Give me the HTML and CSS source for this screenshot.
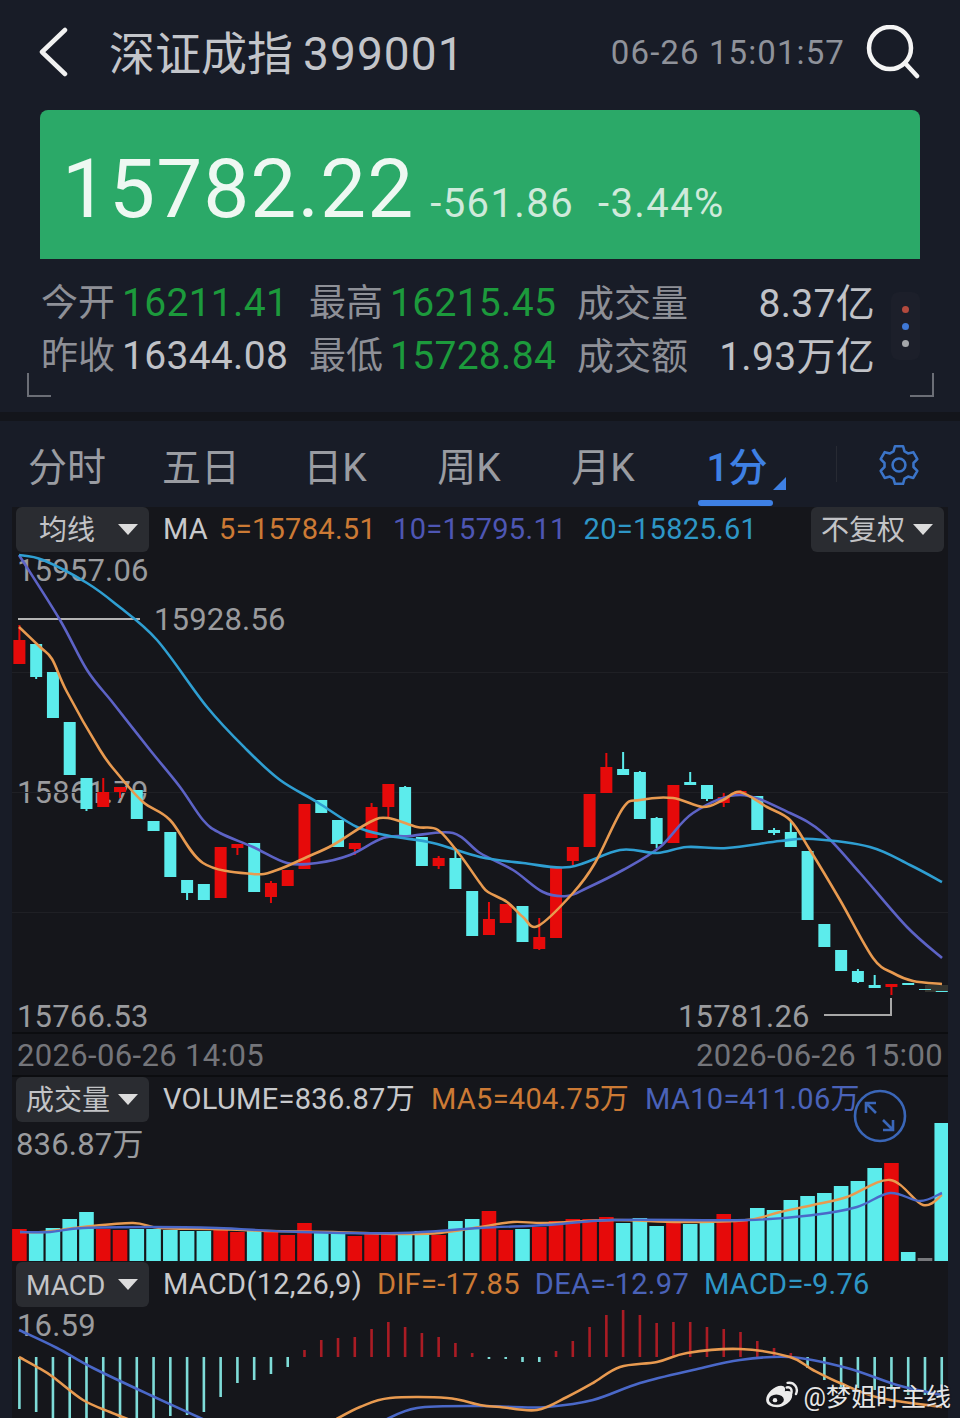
FILE: index.html
```html
<!DOCTYPE html>
<html lang="zh">
<head>
    <meta charset="UTF-8">
    <title>深证成指 399001</title>
    <link rel="stylesheet" href="styles.css">
</head>
<body>
<div class="page">
    <header class="topbar">
        <svg class="back" width="30" height="50" viewBox="0 0 30 50"><path d="M26 3 3 25l23 22"/></svg>
        <h1 class="title">深证成指<span class="code">399001</span></h1>
        <span class="clock">06-26 15:01:57</span>
        <svg class="search" width="54" height="54" viewBox="0 0 54 54"><circle cx="24" cy="23" r="21"/><path d="M39 38 51 51"/></svg>
    </header>

    <section class="quote">
        <span class="price">15782.22</span>
        <span class="change">-561.86</span>
        <span class="change">-3.44%</span>
    </section>

    <section class="stats">
        <div class="stat"><span class="key">今开</span><span class="down">16211.41</span></div>
        <div class="stat"><span class="key">最高</span><span class="down">16215.45</span></div>
        <div class="stat stat-wide"><span class="key">成交量</span><span class="plain">8.37亿</span></div>
        <div class="stat"><span class="key">昨收</span><span class="plain">16344.08</span></div>
        <div class="stat"><span class="key">最低</span><span class="down">15728.84</span></div>
        <div class="stat stat-wide"><span class="key">成交额</span><span class="plain">1.93万亿</span></div>
        <div class="dots"><i class="dot-red"></i><i class="dot-blue"></i><i class="dot-grey"></i></div>
        <i class="corner corner-l"></i>
        <i class="corner corner-r"></i>
    </section>

    <nav class="tabs">
        <a class="tab">分时</a>
        <a class="tab">五日</a>
        <a class="tab">日K</a>
        <a class="tab">周K</a>
        <a class="tab">月K</a>
        <a class="tab active">1分</a>
        <i class="tab-sep"></i>
        <svg class="gear" width="44" height="44" viewBox="0 0 48 48">
            <path d="M19.6 3.5h8.8L30 9.2l3.9 2.2 5.7-1.4 4.4 7.5-4.2 4.3v4.4l4.2 4.3-4.4 7.6-5.7-1.5-3.9 2.2-1.6 5.7h-8.8L18 38.8l-3.9-2.2-5.7 1.5L4 30.5l4.2-4.3v-4.4L4 17.5 8.4 10l5.7 1.4L18 9.2z"/>
            <circle cx="24" cy="24" r="7"/>
        </svg>
    </nav>

    <main class="charts">
        <section class="pane pane-main">
            <div class="pane-head">
                <span class="select">均线<i class="caret"></i></span>
                <span class="legend">
                    <span class="plain-l">MA</span>
                    <span class="c-orange">5=15784.51</span>
                    <span class="c-purple">10=15795.11</span>
                    <span class="c-sky">20=15825.61</span>
                </span>
                <span class="select select-right">不复权<i class="caret"></i></span>
            </div>
            <span class="tick tick-top">15957.06</span>
            <span class="tick tick-high">15928.56</span>
            <span class="tick tick-mid">15861.79</span>
            <span class="tick tick-bottom">15766.53</span>
            <span class="tick tick-low">15781.26</span>
        </section>

        <div class="axis">
            <span>2026-06-26 14:05</span>
            <span>2026-06-26 15:00</span>
        </div>

        <section class="pane pane-vol">
            <div class="pane-head">
                <span class="select">成交量<i class="caret"></i></span>
                <span class="legend">
                    <span class="plain-l">VOLUME=836.87万</span>
                    <span class="c-orange">MA5=404.75万</span>
                    <span class="c-blue">MA10=411.06万</span>
                </span>
            </div>
            <span class="tick tick-vol">836.87万</span>
        </section>

        <section class="pane pane-macd">
            <div class="pane-head">
                <span class="select">MACD<i class="caret"></i></span>
                <span class="legend">
                    <span class="plain-l">MACD(12,26,9)</span>
                    <span class="c-orange">DIF=-17.85</span>
                    <span class="c-blue">DEA=-12.97</span>
                    <span class="c-sky">MACD=-9.76</span>
                </span>
            </div>
            <span class="tick tick-macd">16.59</span>
        </section>

        <svg id="plot" class="plot" width="936" height="911" viewBox="12 507 936 911"></svg>

        <svg class="expand" width="56" height="56" viewBox="0 0 56 56">
            <circle cx="28" cy="28" r="25"/>
            <path d="M14 15 24 25M31 32 41 42M14 25V15H24M41 32V42H31"/>
        </svg>
    </main>

    <div class="mark">
        <svg width="34" height="28" viewBox="0 0 36 30">
            <path class="mark-body" d="M1 20C1 13 10 5 17 5c4 0 5 3 4 6 5-1 8 0 8 4 0 7-9 13-16 13C6 28 1 25 1 20z"/>
            <ellipse class="mark-eye" cx="12" cy="20" rx="8" ry="5.5"/>
            <circle class="mark-pupil" cx="10.5" cy="20.5" r="2.4"/>
            <path class="mark-arc" d="M23 7c4-1 6 2 5 6M24 2c7-1 12 5 9 12"/>
        </svg>
        <span>@梦姐盯主线</span>
    </div>
</div>
<script src="chart.js"></script>
</body>
</html>
```

FILE: styles.css
```css
* {
    margin: 0;
    padding: 0;
    box-sizing: border-box;
}
body {
    background-color: #181c27;
    font-family: Roboto, "Noto Sans CJK SC", sans-serif;
}
.page {
    position: relative;
    width: 960px;
    height: 1418px;
    overflow: hidden;
    background-color: #181c27;
}

/* top bar */
.topbar {
    display: flex;
    align-items: center;
    height: 110px;
    padding: 0 40px 6px 39px;
}
.back path {
    fill: none;
    stroke: #f1f1f1;
    stroke-width: 4.5;
    stroke-linecap: round;
    stroke-linejoin: round;
}
.title {
    margin-left: 40px;
    margin-top: -4px;
    font-size: 46px;
    font-weight: 400;
    color: #c3c5ca;
    white-space: nowrap;
}
.code {
    margin-left: 10px;
    letter-spacing: 1.1px;
}
.clock {
    margin-left: auto;
    margin-right: 21px;
    margin-top: 1px;
    font-size: 33px;
    letter-spacing: 1.1px;
    color: #8f929a;
}
.search {
    flex: none;
}
.search circle,
.search path {
    fill: none;
    stroke: #f4f4f4;
    stroke-width: 4.5;
    stroke-linecap: round;
}

/* price box */
.quote {
    display: flex;
    align-items: baseline;
    height: 149px;
    margin: 0 40px;
    padding: 33px 0 0 22px;
    background-color: #2ba968;
    border-radius: 8px 8px 0 0;
    color: #eef8f2;
}
.price {
    font-size: 82px;
    line-height: 92px;
    letter-spacing: 1px;
}
.change {
    margin-left: 16px;
    font-size: 40px;
    letter-spacing: 1.4px;
    color: #cfeadb;
}
.change + .change {
    margin-left: 24px;
}

/* open / high / low */
.stats {
    position: relative;
    display: grid;
    grid-template-columns: 268px 268px 298px;
    grid-auto-rows: 53px;
    align-items: center;
    height: 153px;
    padding: 14px 0 0 41px;
    font-size: 39px;
    letter-spacing: 0.3px;
    color: #c0c2c7;
}
.stat {
    display: flex;
    align-items: baseline;
    gap: 7px;
    white-space: nowrap;
}
.stat-wide {
    justify-content: space-between;
}
.key {
    font-size: 37px;
    letter-spacing: 0;
    color: #8e9097;
}
.down {
    color: #1c9a3c;
}
.dots {
    position: absolute;
    left: 891px;
    top: 33px;
    display: flex;
    flex-direction: column;
    align-items: center;
    gap: 10px;
    width: 29px;
    height: 68px;
    padding-top: 14px;
    background-color: #1c1f2a;
    border-radius: 8px;
}
.dots i {
    width: 7px;
    height: 7px;
    border-radius: 50%;
}
.dot-red { background-color: #b34a3e; }
.dot-blue { background-color: #3f78d6; }
.dot-grey { background-color: #a4a6aa; }
.corner {
    position: absolute;
    top: 114px;
    width: 24px;
    height: 24px;
    border-bottom: 2px solid #6b6e76;
}
.corner-l {
    left: 27px;
    border-left: 2px solid #6b6e76;
}
.corner-r {
    left: 910px;
    border-right: 2px solid #6b6e76;
}

/* period tabs */
.tabs {
    position: relative;
    display: flex;
    align-items: center;
    height: 95px;
    padding-bottom: 1px;
    border-top: 9px solid #13151b;
}
.tab {
    position: relative;
    width: 134px;
    font-size: 39px;
    text-align: center;
    color: #9a9ca2;
}
.tab.active {
    font-weight: 500;
    color: #3e80e4;
}
.tab.active::before {
    content: "";
    position: absolute;
    left: 28px;
    top: 64px;
    width: 75px;
    height: 6px;
    background-color: #3e80e4;
    border-radius: 3px;
}
.tab.active::after {
    content: "";
    position: absolute;
    left: 103px;
    top: 41px;
    border-style: solid;
    border-width: 0 0 13px 13px;
    border-color: transparent transparent #3e80e4 transparent;
}
.tab-sep {
    width: 1px;
    height: 36px;
    margin-left: 32px;
    background-color: #272a33;
}
.gear {
    margin-left: 40px;
    margin-top: 2px;
}
.gear path,
.gear circle {
    fill: none;
    stroke: #3b74c8;
    stroke-width: 2.8;
    stroke-linejoin: round;
}

/* chart area */
.charts {
    position: relative;
    width: 936px;
    height: 911px;
    margin-left: 12px;
    background-color: #15161b;
}
.pane {
    position: relative;
}
.pane-main { height: 525px; }
.pane-vol { height: 185px; }
.pane-macd { height: 156px; }
.pane-head {
    display: flex;
    align-items: center;
    height: 45px;
    padding: 0 4px;
}
.select {
    position: relative;
    display: block;
    width: 133px;
    height: 45px;
    padding: 0 0 0 10px;
    background-color: #2a2c31;
    border-radius: 6px;
    font-size: 28px;
    line-height: 47px;
    color: #c2c3c6;
    white-space: nowrap;
}
.pane-main .select {
    padding-left: 23px;
}
.pane-main .select-right {
    margin-left: auto;
    padding-left: 10px;
}
.caret {
    position: absolute;
    right: 11px;
    top: 17px;
    border-style: solid;
    border-width: 11px 10px 0 10px;
    border-color: #dcdcdc transparent transparent transparent;
}
.legend {
    display: flex;
    gap: 16px;
    margin-left: 14px;
    font-size: 29px;
    line-height: 47px;
    white-space: nowrap;
}
.pane-macd .legend {
    gap: 15px;
}
.pane-main .legend {
    gap: 17px;
}
.legend span {
    letter-spacing: 0.3px;
}
.pane-main .plain-l {
    margin-right: -6px;
}
.plain-l { color: #c8c9cc; }
.c-orange { color: #cc7a35; }
.c-purple { color: #4e56b4; }
.c-blue { color: #4a62b8; }
.c-sky { color: #2e96c6; }

/* price marks that sit over the plot */
.tick {
    position: absolute;
    font-size: 31px;
    line-height: 36px;
    letter-spacing: 0.2px;
    color: #9a9b9e;
    white-space: nowrap;
}
.tick-top { left: 5px; top: 46px; }
.tick-high { left: 142px; top: 95px; }
.tick-mid { left: 5px; top: 268px; }
.tick-bottom { left: 5px; top: 492px; }
.tick-low { left: 666px; top: 492px; }
.tick-vol { left: 4px; top: 50px; }
.tick-macd { left: 5px; top: 46px; }

.axis {
    display: flex;
    justify-content: space-between;
    align-items: center;
    height: 45px;
    padding: 2px 5px 0;
    background-color: #15161b;
    border-top: 2px solid #0c0d10;
    border-bottom: 2px solid #0c0d10;
    font-size: 31px;
    letter-spacing: 0.35px;
    color: #74757a;
}
.plot {
    position: absolute;
    left: 0;
    top: 0;
}
.expand {
    position: absolute;
    left: 840px;
    top: 581px;
}
.expand circle,
.expand path {
    fill: none;
    stroke: #3a66b8;
    stroke-width: 2.6;
}

/* watermark */
.mark {
    position: absolute;
    right: 9px;
    bottom: 5px;
    display: flex;
    align-items: center;
    gap: 5px;
    font-size: 25px;
    color: #e6e6e6;
    text-shadow: 0 1px 2px rgba(0, 0, 0, 0.5);
}
.mark-body { fill: #ececec; }
.mark-eye { fill: #15161b; }
.mark-pupil { fill: #ececec; }
.mark-arc {
    fill: none;
    stroke: #ececec;
    stroke-width: 2.6;
    stroke-linecap: round;
}
```

FILE: chart.js
```js
var NS = 'http://www.w3.org/2000/svg';
var oPlot = document.getElementById('plot');
var UP = '#e60a0a', DOWN = '#5cecec';
var ORANGE = '#e89a50', LILAC = '#5d63c6', SKY = '#2f9fd2', BLUE = '#4a68c8';

function step(i) { return 19.4 + 16.77 * i; }

function add(tag, attrs) {
    var el = document.createElementNS(NS, tag);
    for (var k in attrs) el.setAttribute(k, attrs[k]);
    oPlot.appendChild(el);
    return el;
}
function rect(x, y, w, h, fill) {
    add('rect', { x: x, y: y, width: w, height: h, fill: fill });
}
// catmull-rom through the points
function curve(pts, color, w) {
    var d = 'M' + pts[0][0] + ' ' + pts[0][1];
    for (var i = 0; i < pts.length - 1; i++) {
        var p0 = pts[i - 1] || pts[i], p1 = pts[i], p2 = pts[i + 1], p3 = pts[i + 2] || p2;
        d += 'C' + (p1[0] + (p2[0] - p0[0]) / 6).toFixed(1) + ' ' + (p1[1] + (p2[1] - p0[1]) / 6).toFixed(1) +
            ' ' + (p2[0] - (p3[0] - p1[0]) / 6).toFixed(1) + ' ' + (p2[1] - (p3[1] - p1[1]) / 6).toFixed(1) +
            ' ' + p2[0] + ' ' + p2[1];
    }
    add('path', { d: d, fill: 'none', stroke: color, 'stroke-width': w, 'stroke-linejoin': 'round' });
}

// grid
[672, 792, 912].forEach(function (y) { rect(12, y, 936, 1, '#1f2025'); });

// candles: top, bottom, wick top, wick bottom, 1 = red
var candles = [
    [640, 664, 625, 664, 1], [644, 677, 644, 679, 0], [672, 718, 672, 718, 0], [722, 775, 722, 775, 0],
    [778, 809, 778, 811, 0], [792, 807, 778, 807, 1], [787, 792, 787, 798, 1], [790, 819, 790, 819, 0],
    [821, 831, 821, 831, 0], [832, 877, 832, 877, 0], [880, 893, 880, 900, 0], [884, 900, 884, 900, 0],
    [847, 898, 847, 898, 1], [844, 848, 844, 855, 1], [843, 892, 843, 892, 0], [883, 897, 881, 903, 1],
    [870, 886, 870, 886, 1], [804, 869, 804, 869, 1], [800, 813, 800, 813, 0], [820, 847, 820, 847, 0],
    [843, 849, 843, 855, 1], [807, 838, 803, 838, 1], [784, 807, 784, 817, 1], [787, 835, 786, 835, 0],
    [837, 866, 837, 866, 0], [858, 866, 856, 869, 1], [858, 889, 848, 889, 0], [891, 936, 891, 936, 0],
    [919, 935, 902, 935, 1], [904, 923, 904, 923, 1], [906, 942, 906, 942, 0], [937, 949, 918, 950, 1],
    [868, 938, 868, 938, 1], [847, 861, 847, 865, 1], [794, 847, 794, 847, 1], [767, 793, 753, 793, 1],
    [769, 775, 752, 775, 0], [772, 819, 771, 819, 0], [818, 844, 817, 848, 0], [785, 843, 785, 843, 1],
    [782, 785, 772, 785, 0], [785, 799, 785, 801, 0], [797, 803, 793, 807, 1], [791, 794, 790, 796, 1],
    [796, 830, 796, 830, 0], [830, 833, 828, 835, 0], [832, 847, 822, 847, 0], [851, 920, 851, 920, 0],
    [924, 947, 924, 947, 0], [950, 971, 950, 971, 0], [971, 982, 969, 983, 0], [985, 988, 975, 988, 0],
    [984, 987, 984, 995, 1], [983, 985, 983, 985, 0], [989, 990, 989, 990, 0], [991, 992, 991, 992, 0]
];
// the dark smudge at the right end
rect(925, 985, 23, 7, '#33342f');
candles.forEach(function (c, i) {
    var x = step(i), col = c[4] ? UP : DOWN;
    rect(x - 1, c[2], 2, c[3] - c[2], col);
    rect(x - 6, c[0], 12, c[1] - c[0], col);
});

// pointer lines of the high and low marks
rect(18, 618, 122, 2, '#b4b4b4');
add('path', { d: 'M824 1015H891V998', fill: 'none', stroke: '#a8a8a8', 'stroke-width': 2 });

curve([[19, 555], [60, 620], [87, 670], [113, 703], [150, 750], [180, 787], [203, 820], [220, 833], [253, 847], [287, 863], [317, 863], [350, 855], [383, 838], [410, 836], [453, 833], [480, 853], [513, 870], [543, 892], [567, 896], [587, 888], [623, 870], [660, 847], [693, 813], [740, 795], [790, 813], [823, 833], [860, 873], [907, 927], [942, 958]], LILAC, 2.6);
curve([[19, 555], [43, 560], [87, 583], [117, 605], [157, 640], [207, 707], [247, 750], [280, 780], [317, 802], [357, 827], [390, 836], [433, 843], [480, 857], [523, 863], [570, 867], [620, 850], [657, 853], [687, 847], [727, 848], [780, 841], [813, 839], [870, 847], [910, 865], [942, 882]], SKY, 2.6);
curve([[19, 627], [40, 647], [52, 659], [67, 692], [100, 750], [117, 773], [143, 802], [170, 820], [203, 863], [253, 874], [277, 870], [307, 857], [333, 845], [370, 822], [388, 818], [417, 827], [438, 830], [460, 855], [480, 883], [488, 892], [507, 902], [523, 917], [538, 926], [573, 893], [595, 863], [623, 808], [640, 800], [673, 798], [703, 807], [723, 800], [740, 792], [767, 807], [790, 820], [810, 850], [840, 900], [873, 958], [893, 973], [913, 981], [942, 984]], ORANGE, 2.6);

// volume
var vol = [1229, 1233, 1228, 1219, 1212, 1229, 1230, 1229, 1229, 1230, 1231, 1231, 1230, 1232,
    1231, 1232, 1235, 1223, 1232, 1232, 1236, 1234, 1235, 1235, 1231, 1235, 1221, 1219,
    1211, 1230, 1229, 1227, 1221, 1219, 1219, 1217, 1223, 1218, 1226, 1220, 1224, 1223,
    1214, 1221, 1208, 1210, 1200, 1196, 1193, 1186, 1181, 1168, 1163, 1252, 1258, 1123];
vol.forEach(function (top, i) {
    var col = candles[i][4] ? UP : DOWN;
    if (i == 54) col = '#77787c';
    rect(step(i) - 7.3, top, 14.6, 1261 - top, col);
});
curve([[20, 1232], [43, 1232], [83, 1227], [133, 1223], [160, 1228], [213, 1229], [267, 1231], [333, 1232], [400, 1234], [440, 1233], [480, 1227], [513, 1222], [547, 1223], [613, 1220], [680, 1222], [747, 1220], [780, 1212], [813, 1205], [847, 1197], [890, 1180], [923, 1205], [942, 1195]], ORANGE, 2.4);
curve([[20, 1232], [50, 1232], [83, 1228], [150, 1227], [217, 1228], [300, 1232], [400, 1233], [480, 1228], [547, 1225], [613, 1220], [747, 1220], [813, 1215], [857, 1207], [890, 1193], [920, 1201], [942, 1193]], BLUE, 2.4);

// macd bars, zero at 1357
var macd = [1409, 1412, 1420, 1420, 1420, 1420, 1420, 1420, 1420, 1416, 1415, 1412, 1397, 1383, 1380, 1374, 1367,
    1350, 1340, 1338, 1337, 1329, 1322, 1327, 1333, 1337, 1343, 1353,
    1359, 1359, 1362, 1362, 1351, 1341, 1327, 1315, 1310, 1315, 1323, 1322, 1322, 1327, 1329, 1332, 1341, 1348, 1353,
    1368, 1380, 1387, 1388, 1390, 1390, 1395, 1395, 1396];
macd.forEach(function (y, i) {
    if (y > 1357) rect(step(i) - 1.3, 1357, 2.6, y - 1357, '#7edcd8');
    else rect(step(i) - 1.3, y, 2.6, 1357 - y, '#aa1c24');
});
// both lines leave the bottom of the picture in the middle
curve([[19, 1330], [57, 1348], [93, 1368], [150, 1395], [207, 1421]], BLUE, 2.6);
curve([[383, 1421], [417, 1408], [480, 1406], [513, 1407], [547, 1407], [593, 1400], [640, 1383], [693, 1370], [740, 1360], [790, 1357], [847, 1368], [897, 1385], [942, 1395]], BLUE, 2.6);
curve([[19, 1357], [37, 1367], [53, 1377], [83, 1400], [110, 1412], [133, 1421]], ORANGE, 2.6);
curve([[333, 1421], [360, 1407], [390, 1398], [447, 1398], [480, 1405], [500, 1407], [537, 1410], [567, 1397], [593, 1383], [620, 1367], [657, 1362], [687, 1353], [740, 1349], [790, 1357], [813, 1370], [840, 1383], [880, 1398], [942, 1407]], ORANGE, 2.6);
```
